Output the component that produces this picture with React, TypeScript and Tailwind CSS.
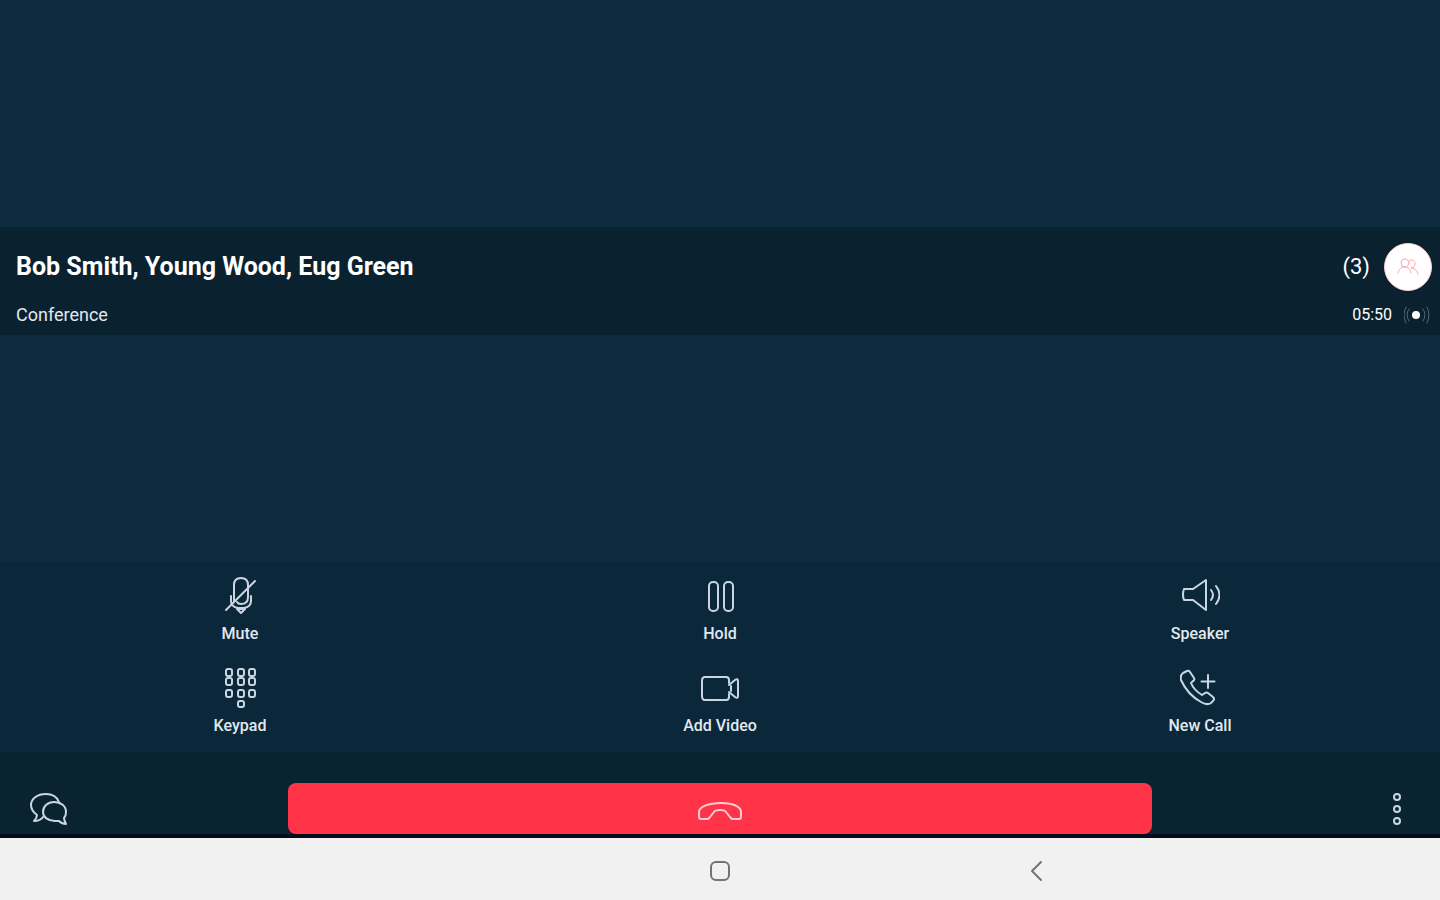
import type { ReactNode } from 'react';

const stroke = {
    fill: 'none',
    stroke: 'currentColor',
    strokeWidth: 2,
    strokeLinecap: 'round',
    strokeLinejoin: 'round',
} as const;

function MuteIcon() {
    return (
        <svg width="40" height="40" viewBox="0 0 40 40" aria-hidden="true" {...stroke}>
            <path d="M14 25V9q0-7 7-7t7 7v12q0 7-7 7-3 0-4-2" />
            <path d="M11 20v5q0 6 7 7h6q7-1 7-7v-5" />
            <path d="M17 33h8l-4 4ZM6 34 35 5" />
        </svg>
    );
}

function HoldIcon() {
    return (
        <svg width="40" height="40" viewBox="0 0 40 40" aria-hidden="true" {...stroke}>
            <rect x="9" y="6" width="9" height="29" rx="4" />
            <rect x="24" y="6" width="9" height="29" rx="4" />
        </svg>
    );
}

function SpeakerIcon() {
    return (
        <svg width="40" height="40" viewBox="0 0 40 40" aria-hidden="true" {...stroke}>
            <path d="M4 13h9L26 4v30L13 24H4q-2-5.500 0-11Z" />
            <path d="M31 14q4 5 0 10M36 10q7 9 0 18" />
        </svg>
    );
}

function KeypadIcon() {
    return (
        <svg width="40" height="44" viewBox="0 0 40 44" aria-hidden="true" {...stroke}>
            {[6, 18, 29].map((x) =>
                [3, 12, 24].map((y) => (
                    <rect key={`${x}-${y}`} x={x} y={y} width="6" height="7" rx="2" />
                ))
            )}
            <rect x="18" y="35" width="6" height="6" rx="2" />
        </svg>
    );
}

function VideoIcon() {
    return (
        <svg width="40" height="44" viewBox="0 0 40 44" aria-hidden="true" {...stroke}>
            <path d="M29 17v-3q0-3-3-3H5q-3 0-3 4v15q0 4 3 4h21q3 0 3-3v-3" />
            <path d="M29 19 35 14q3-2 3 1v15q0 3-3 1L29 26" />
            <path d="M31 20v5" />
        </svg>
    );
}

function NewCallIcon() {
    return (
        <svg width="40" height="44" viewBox="0 0 40 44" aria-hidden="true" {...stroke}>
            <path d="M3 7 7 5q2-1 3 1l4 6q1 2-1 3l-2 2c2 5 6 9 11 12l3-2q2-1 3 0l5 4q2 2 0 4c-3 4-7 4-12 1C12 31 5 23 1 14Q0 9 3 7Z" />
            <path d="M28 9v13M21.500 15.500h13" />
        </svg>
    );
}

function PeopleIcon() {
    return (
        <svg
            width="22"
            height="18"
            viewBox="0 0 22 18"
            aria-hidden="true"
            {...stroke}
            strokeWidth={1}
        >
            <circle cx="8" cy="5" r="4" />
            <path d="M1 15c1-4 3-6 7-6 3 0 5 2 6 6" />
            <path d="M12 3c3-2 6-1 6 3 0 2-1 4-4 4 3 0 6 2 7 6" />
        </svg>
    );
}

function SignalIcon() {
    return (
        <svg width="28" height="20" viewBox="0 0 28 20" aria-hidden="true" {...stroke}>
            <circle cx="12" cy="10" r="4" fill="currentColor" stroke="none" />
            <path
                d="M5 4q-4 6 0 12M19 4q4 6 0 12M2 2q-4 8 0 16M23 2q4 8 0 16"
                strokeWidth="1"
                opacity="0.3"
            />
        </svg>
    );
}

function ChatIcon() {
    return (
        <svg width="40" height="36" viewBox="0 0 40 36" aria-hidden="true" {...stroke}>
            <path d="M31 11C29 6 24 3 18 3 9 3 3 8 3 14c0 4 2 7 6 10 0 2-1 4-3 6 4 0 7-1 9-4" />
            <path d="M26 11c-6 0-11 4-11 10 0 5 5 9 12 9h4c2 2 4 3 7 3-1-2-2-4-2-6 2-2 2-4 2-6 0-6-5-10-12-10Z" />
        </svg>
    );
}

function HangUpIcon() {
    return (
        <svg width="48" height="24" viewBox="0 0 48 24" aria-hidden="true" {...stroke}>
            <path d="M3 20v-5C3 10 12 6 25 6s20 4 20 9v5q0 2-2 2h-6q-2 0-3-2l-4-5q-1-2-6-2t-6 2l-4 5q-1 2-3 2H5q-2 0-2-2Z" />
        </svg>
    );
}

function MoreIcon() {
    return (
        <svg width="12" height="34" viewBox="0 0 12 34" aria-hidden="true" {...stroke}>
            <circle cx="5" cy="5" r="3" />
            <circle cx="5" cy="17" r="3" />
            <circle cx="5" cy="29" r="3" />
        </svg>
    );
}

type ControlProps = {
    icon: ReactNode;
    label: string;
};

function Control({ icon, label }: ControlProps) {
    return (
        <button
            type="button"
            className="flex flex-col items-center gap-1.5 text-base font-medium leading-5 text-slate-200"
        >
            <span className="flex h-11 items-center text-slate-300">{icon}</span>
            {label}
        </button>
    );
}

export default function App() {
    return (
        <div className="flex min-h-screen flex-col bg-[#0d2c3f] font-['Roboto','Liberation_Sans',sans-serif]">
            <div className="flex-1" />

            {/* Call info */}
            <header className="bg-[#0a2230] pt-4 pb-2 pl-4 pr-2 text-white">
                <div className="flex items-center justify-between gap-4">
                    <h1 className="text-[25px] font-bold leading-8">
                        Bob Smith, Young Wood, Eug Green
                    </h1>
                    <div className="flex items-center gap-3.5">
                        <span className="text-[22px] leading-8">(3)</span>
                        <span className="flex size-12 items-center justify-center rounded-full border border-rose-200 bg-white text-rose-300">
                            <PeopleIcon />
                        </span>
                    </div>
                </div>
                <div className="mt-3 flex items-center justify-between gap-4">
                    <p className="text-lg leading-6 text-slate-200">Conference</p>
                    <div className="flex items-center gap-3 text-base leading-6">
                        <span>05:50</span>
                        <SignalIcon />
                    </div>
                </div>
            </header>

            <div className="flex-1" />

            {/* Call controls */}
            <div className="grid grid-cols-3 gap-y-[22px] bg-[#0a283a] pt-3 pb-4">
                <Control icon={<MuteIcon />} label="Mute" />
                <Control icon={<HoldIcon />} label="Hold" />
                <Control icon={<SpeakerIcon />} label="Speaker" />
                <Control icon={<KeypadIcon />} label="Keypad" />
                <Control icon={<VideoIcon />} label="Add Video" />
                <Control icon={<NewCallIcon />} label="New Call" />
            </div>

            <div className="grid grid-cols-[1fr_3fr_1fr] items-center border-b-4 border-[#030b1d] bg-[#0a2330] pt-[31px] text-slate-300">
                <button type="button" aria-label="Chat" className="justify-self-start pl-7">
                    <ChatIcon />
                </button>
                <button
                    type="button"
                    aria-label="End call"
                    className="flex h-[51px] items-center justify-center rounded-lg bg-[#ff3449] text-rose-200"
                >
                    <HangUpIcon />
                </button>
                <button type="button" aria-label="More" className="justify-self-end pr-9">
                    <MoreIcon />
                </button>
            </div>

            {/* System navigation */}
            <nav className="bg-[#f1f1f1] text-neutral-500">
                <div className="mx-auto grid h-[62px] w-[66%] grid-cols-3 place-items-center pt-1">
                    <button type="button" aria-label="Home" className="col-start-2">
                        <svg width="24" height="24" viewBox="0 0 24 24" aria-hidden="true" {...stroke}>
                            <rect x="3" y="3" width="18" height="18" rx="5" />
                        </svg>
                    </button>
                    <button type="button" aria-label="Back">
                        <svg width="24" height="24" viewBox="0 0 24 24" aria-hidden="true" {...stroke}>
                            <path d="M16 3 7 12l9 9" />
                        </svg>
                    </button>
                </div>
            </nav>
        </div>
    );
}
